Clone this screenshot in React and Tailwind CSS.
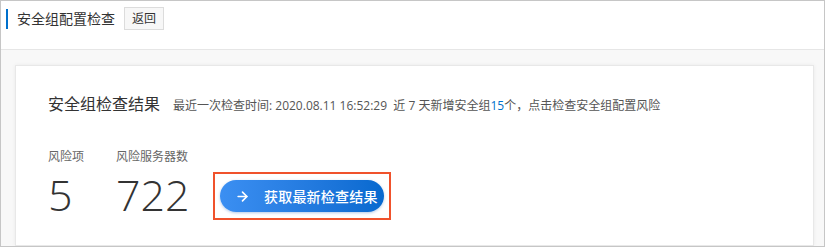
import { ArrowRight } from 'lucide-react';

const font = { fontFamily: '"Open Sans", "Noto Sans CJK SC", sans-serif' };

export default function App() {
  return (
    <div
      className="w-[825px] h-[247px] border border-[#c6c6c6] bg-[#f8f8f8] overflow-hidden flex flex-col"
      style={font}
    >
      {/* header */}
      <div className="h-[49px] bg-white border-b border-[#e6e6e6] flex items-start pt-[6px] pl-[5px] shrink-0">
        <div className="flex items-center h-[23px]">
          <span className="w-[2px] h-[20px] bg-[#0070cc] mr-[9px]" />
          <span className="text-[14px] text-[#333] leading-none">安全组配置检查</span>
          <button className="ml-[9px] h-[23px] px-[7px] border border-[#dcdcdc] bg-[#f7f7f7] text-[12px] text-[#333] leading-none">
            返回
          </button>
        </div>
      </div>

      {/* body */}
      <div className="flex-1 pt-[15px] pl-[14px] pr-[10px]">
        <div className="h-full bg-white border border-[#e8e8e8] shadow-[0_0_4px_rgba(0,0,0,0.06)] pl-[32px] pt-[26px]">
          <div className="flex items-baseline">
            <span className="text-[16px] text-[#333]">安全组检查结果</span>
            <span className="ml-[13px] text-[12px] text-[#555]">
              最近一次检查时间: 2020.08.11 16:52:29&nbsp;&nbsp;近 7 天新增安全组
              <span className="text-[#0070cc]">15</span>个，点击检查安全组配置风险
            </span>
          </div>

          <div className="flex items-start mt-[33px]">
            <div className="flex flex-col w-[68px]">
              <span className="text-[12px] text-[#666] leading-[16px]">风险项</span>
              <span className="text-[43px] font-light text-[#333] leading-[44px] mt-[8px]">5</span>
            </div>
            <div className="flex flex-col w-[97px]">
              <span className="text-[12px] text-[#666] leading-[16px]">风险服务器数</span>
              <span className="text-[43px] font-light text-[#333] leading-[44px] mt-[8px]">722</span>
            </div>
            <div className="mt-[23px] border-2 border-[#f0522c] px-[5px] py-[6px]">
              <button className="w-[164px] h-[32px] rounded-full bg-gradient-to-r from-[#3b8ff2] to-[#0669cf] flex items-center pl-[15px] text-white shadow-[0_1px_3px_rgba(0,80,180,0.3)]">
                <ArrowRight size={15} strokeWidth={2.6} />
                <span className="ml-[14px] text-[14px] font-medium tracking-[0.2px]">获取最新检查结果</span>
              </button>
            </div>
          </div>
        </div>
      </div>
    </div>
  );
}
